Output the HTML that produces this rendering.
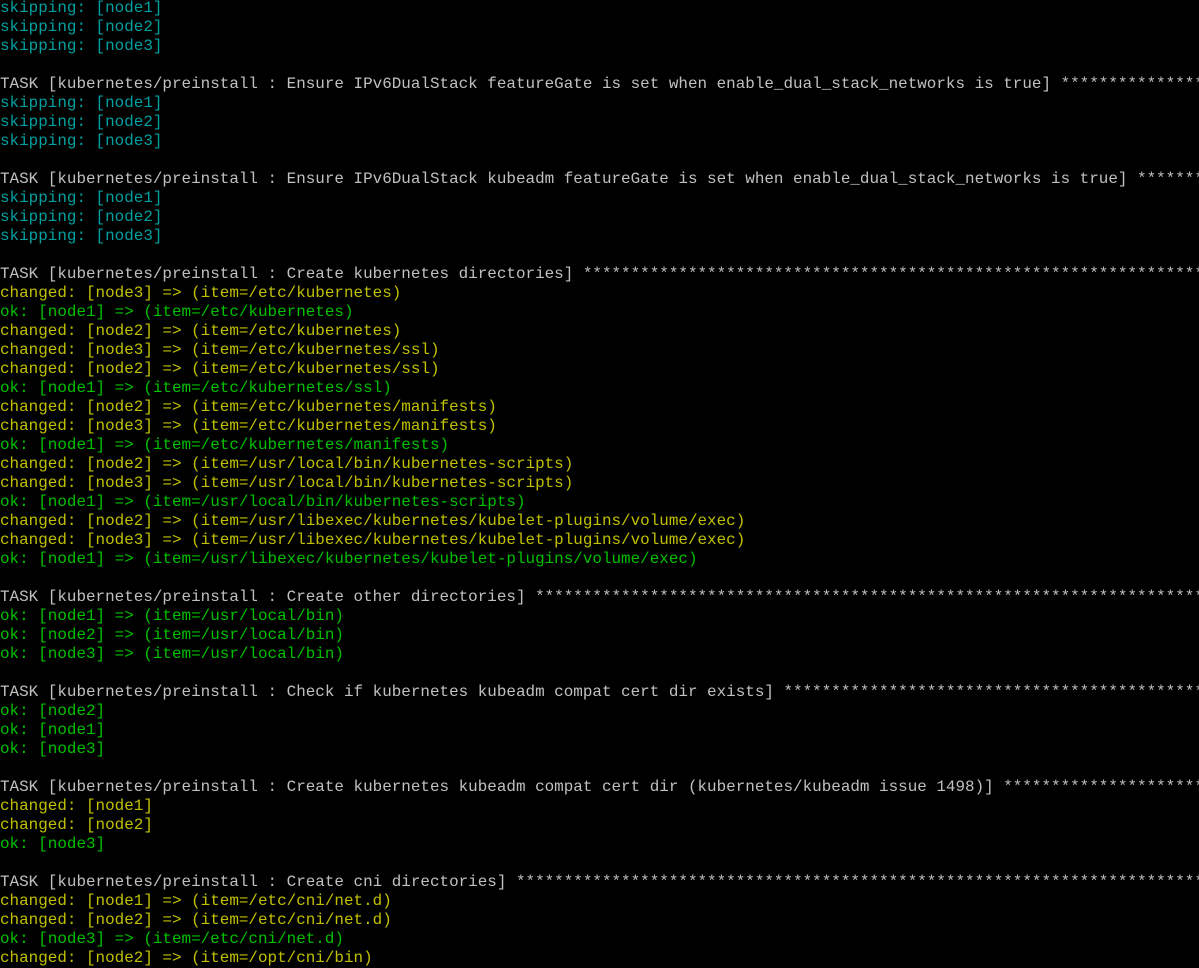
<!DOCTYPE html>
<html><head><meta charset="utf-8"><style>
html,body{margin:0;padding:0;background:#000;width:1199px;height:966px;overflow:hidden}
pre{margin:0;padding:0;position:absolute;top:-1px;left:0;width:1199px;overflow:hidden;font-family:"Liberation Mono",monospace;font-size:15.93px;line-height:19px;color:#c0c0c0;white-space:pre}
.c{color:#00a0a0}.y{color:#c0c000}.g{color:#00c000}
</style></head><body><pre><span class="c">skipping: [node1]
skipping: [node2]
skipping: [node3]</span>

TASK [kubernetes/preinstall : Ensure IPv6DualStack featureGate is set when enable_dual_stack_networks is true] ******************************
<span class="c">skipping: [node1]
skipping: [node2]
skipping: [node3]</span>

TASK [kubernetes/preinstall : Ensure IPv6DualStack kubeadm featureGate is set when enable_dual_stack_networks is true] **********************
<span class="c">skipping: [node1]
skipping: [node2]
skipping: [node3]</span>

TASK [kubernetes/preinstall : Create kubernetes directories] ****************************************************************************************
<span class="y">changed: [node3] =&gt; (item=/etc/kubernetes)</span>
<span class="g">ok: [node1] =&gt; (item=/etc/kubernetes)</span>
<span class="y">changed: [node2] =&gt; (item=/etc/kubernetes)
changed: [node3] =&gt; (item=/etc/kubernetes/ssl)
changed: [node2] =&gt; (item=/etc/kubernetes/ssl)</span>
<span class="g">ok: [node1] =&gt; (item=/etc/kubernetes/ssl)</span>
<span class="y">changed: [node2] =&gt; (item=/etc/kubernetes/manifests)
changed: [node3] =&gt; (item=/etc/kubernetes/manifests)</span>
<span class="g">ok: [node1] =&gt; (item=/etc/kubernetes/manifests)</span>
<span class="y">changed: [node2] =&gt; (item=/usr/local/bin/kubernetes-scripts)
changed: [node3] =&gt; (item=/usr/local/bin/kubernetes-scripts)</span>
<span class="g">ok: [node1] =&gt; (item=/usr/local/bin/kubernetes-scripts)</span>
<span class="y">changed: [node2] =&gt; (item=/usr/libexec/kubernetes/kubelet-plugins/volume/exec)
changed: [node3] =&gt; (item=/usr/libexec/kubernetes/kubelet-plugins/volume/exec)</span>
<span class="g">ok: [node1] =&gt; (item=/usr/libexec/kubernetes/kubelet-plugins/volume/exec)</span>

TASK [kubernetes/preinstall : Create other directories] *********************************************************************************************
<span class="g">ok: [node1] =&gt; (item=/usr/local/bin)
ok: [node2] =&gt; (item=/usr/local/bin)
ok: [node3] =&gt; (item=/usr/local/bin)</span>

TASK [kubernetes/preinstall : Check if kubernetes kubeadm compat cert dir exists] *******************************************************************
<span class="g">ok: [node2]
ok: [node1]
ok: [node3]</span>

TASK [kubernetes/preinstall : Create kubernetes kubeadm compat cert dir (kubernetes/kubeadm issue 1498)] ********************************************
<span class="y">changed: [node1]
changed: [node2]</span>
<span class="g">ok: [node3]</span>

TASK [kubernetes/preinstall : Create cni directories] ***********************************************************************************************
<span class="y">changed: [node1] =&gt; (item=/etc/cni/net.d)
changed: [node2] =&gt; (item=/etc/cni/net.d)</span>
<span class="g">ok: [node3] =&gt; (item=/etc/cni/net.d)</span>
<span class="y">changed: [node2] =&gt; (item=/opt/cni/bin)</span>
</pre></body></html>
